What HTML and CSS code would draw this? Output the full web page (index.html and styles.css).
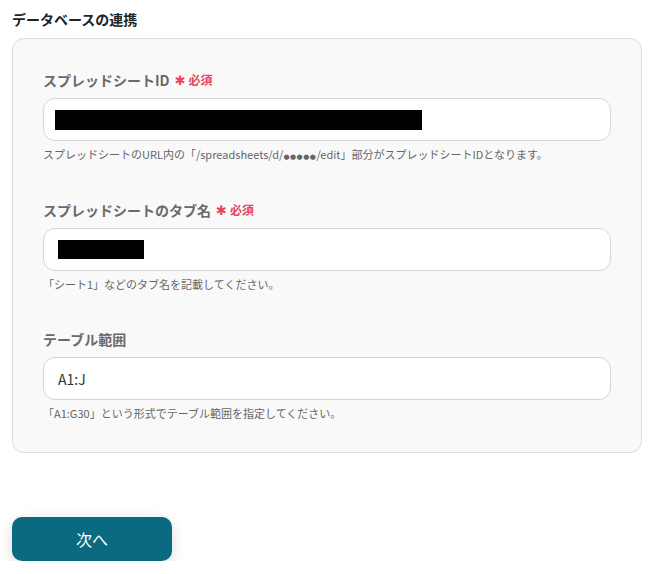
FILE: index.html
```html
<!DOCTYPE html>
<html lang="ja">
<head>
<meta charset="utf-8">
<link rel="stylesheet" href="styles.css">
</head>
<body>
<h2 class="title">データベースの連携</h2>
<div class="card">
  <div class="field">
    <div class="label">スプレッドシートID<span class="req"><span class="ast">✱</span>必須</span></div>
    <div class="input"><span class="mask mask-id"></span></div>
    <div class="hint">スプレッドシートのURL内の「/spreadsheets/d/<span class="dots">●●●●●</span>/edit」部分がスプレッドシートIDとなります。</div>
  </div>
  <div class="field">
    <div class="label">スプレッドシートのタブ名<span class="req"><span class="ast">✱</span>必須</span></div>
    <div class="input"><span class="mask mask-tab"></span></div>
    <div class="hint">「シート1」などのタブ名を記載してください。</div>
  </div>
  <div class="field field-last">
    <div class="label">テーブル範囲</div>
    <div class="input"><span class="value">A1:J</span></div>
    <div class="hint">「A1:G30」という形式でテーブル範囲を指定してください。</div>
  </div>
</div>
<button class="next">次へ</button>
</body>
</html>
```
FILE: styles.css
```css
html, body {
  margin: 0;
  padding: 0;
  background: #ffffff;
}
body {
  padding: 9px 14px 0 12px;
  font-family: "Noto Sans CJK JP", "Noto Sans", sans-serif;
}
.title {
  margin: 0;
  font-size: 14px;
  line-height: 20px;
  font-weight: 700;
  color: #222222;
}
.card {
  margin-top: 9px;
  background: #f9f9f9;
  border: 1px solid #dcdde2;
  border-radius: 12px;
  padding: 31px 30px 31px 30px;
}
.field + .field {
  margin-top: 38px;
}
.field + .field-last {
  margin-top: 37px;
}
.label {
  display: flex;
  align-items: center;
  height: 20px;
  font-size: 14px;
  line-height: 20px;
  font-weight: 700;
  color: #6a6a6a;
  margin-bottom: 8px;
}
.req {
  display: inline-flex;
  align-items: center;
  height: 20px;
  line-height: 20px;
  margin-left: 5px;
  font-size: 12px;
  font-weight: 700;
  color: #e8435a;
}
.ast {
  font-family: "DejaVu Sans", sans-serif;
  font-size: 13px;
  line-height: 20px;
  margin-right: 3px;
  position: relative;
  top: 1px;
}
.input {
  height: 43px;
  box-sizing: border-box;
  background: #ffffff;
  border: 1px solid #d3d5dc;
  border-radius: 12px;
  display: flex;
  align-items: center;
  padding-left: 11px;
}
.mask {
  display: block;
  background: #000000;
  height: 20px;
}
.mask-id {
  width: 367px;
}
.mask-tab {
  width: 86px;
  height: 19px;
  margin-left: 3px;
}
.value {
  margin-left: 3px;
  font-size: 14px;
  color: #333333;
}
.hint {
  margin-top: 5px;
  height: 16px;
  font-size: 11px;
  line-height: 16px;
  color: #666666;
  white-space: nowrap;
}
.dots {
  font-family: "DejaVu Sans", sans-serif;
  font-size: 7px;
  letter-spacing: 0.5px;
  line-height: 16px;
}
.next {
  display: block;
  margin-top: 64px;
  width: 160px;
  height: 44px;
  border: none;
  border-radius: 10px;
  background: #0b6a80;
  color: #ffffff;
  font-family: "Noto Sans CJK JP", sans-serif;
  font-size: 16px;
  box-shadow: 0 4px 14px rgba(0, 0, 0, 0.15);
}
```
